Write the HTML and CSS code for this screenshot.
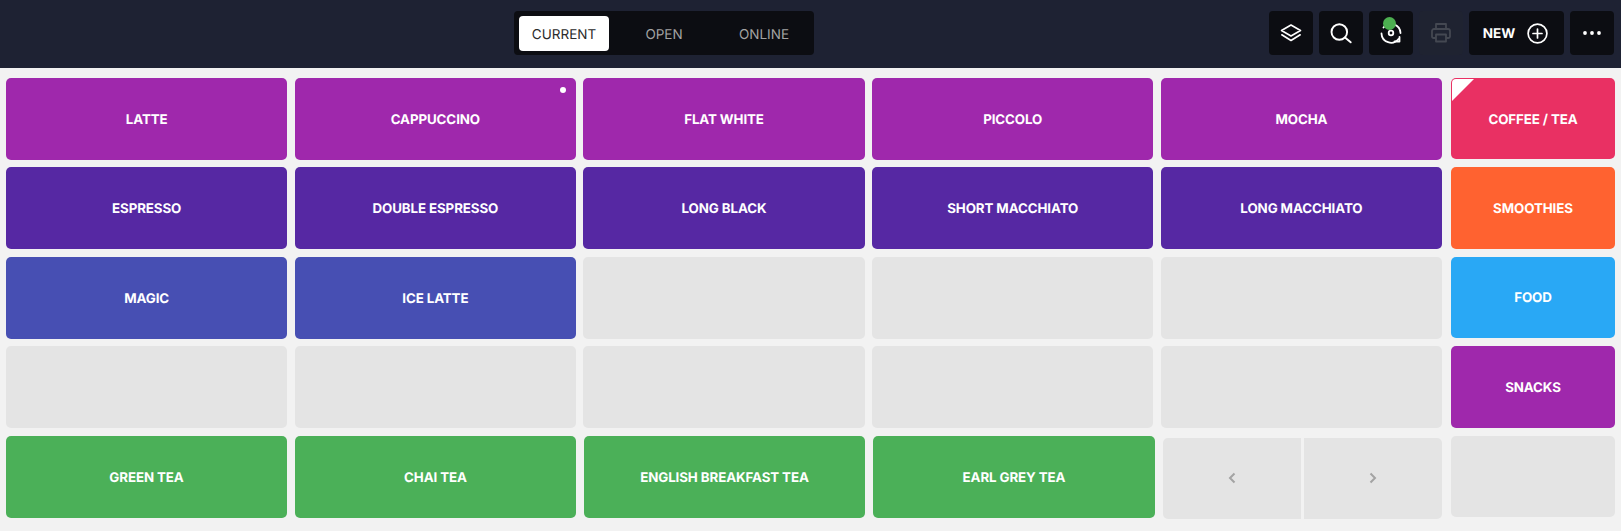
FILE: index.html
```html
<!DOCTYPE html>
<html lang="en">
<head>
<meta charset="utf-8">
<title>POS</title>
<link rel="stylesheet" href="styles.css">
</head>
<body>
<header class="topbar">
  <nav class="tabs">
    <button class="tab tab-active">CURRENT</button>
    <button class="tab">OPEN</button>
    <button class="tab">ONLINE</button>
  </nav>
  <div class="actions">
    <button class="action" aria-label="Layers">
      <svg width="22" height="22" viewBox="0 0 22 22" fill="none" stroke="#fff" stroke-width="1.6" stroke-linejoin="round" stroke-linecap="round"><path d="M11 3 20.500 8.500 11 14 1.500 8.500Z"/><path d="M1.800 12.800 11 18.500 20.200 12.800"/></svg>
    </button>
    <button class="action" aria-label="Search">
      <svg width="24" height="24" viewBox="0 0 24 24" fill="none" stroke="#fff" stroke-width="1.900" stroke-linecap="round"><circle cx="10.300" cy="11" r="7.800"/><path d="M16 16.500 21.700 21.300"/></svg>
    </button>
    <button class="action" aria-label="Sync">
      <svg width="22" height="22" viewBox="0 0 22 22" fill="none" stroke="#fff" stroke-width="1.800" stroke-linecap="round" stroke-linejoin="round"><path d="M1.500 11.500a9.500 9.500 0 0 0 17 5.500"/><path d="M20.500 11a9.500 9.500 0 0 0-17-5.500"/><path d="M14.500 19.500h5v-4.500"/><circle cx="11" cy="11" r="2.300"/></svg>
      <span class="status-dot"></span>
    </button>
    <button class="action action-disabled" aria-label="Print">
      <svg width="22" height="22" viewBox="0 0 22 22" fill="none" stroke="#444852" stroke-width="1.800" stroke-linejoin="round"><path d="M6 7V2h10V7"/><path d="M6 16H3.500A1.500 1.500 0 0 1 2 14.500V9a2 2 0 0 1 2-2h14a2 2 0 0 1 2 2v5.500a1.500 1.500 0 0 1-1.500 1.500H16"/><path d="M6 12.500h10v7H6z"/></svg>
    </button>
    <button class="action action-new">
      <span class="new-label">NEW</span>
      <svg width="21" height="21" viewBox="0 0 21 21" fill="none" stroke="#fff" stroke-width="1.700" stroke-linecap="round"><circle cx="10.500" cy="10.500" r="9.400"/><path d="M10.500 6v9M6 10.500h9"/></svg>
    </button>
    <button class="action" aria-label="More">
      <svg width="20" height="6" viewBox="0 0 20 6" fill="#fff"><circle cx="3" cy="3" r="1.900"/><circle cx="10" cy="3" r="1.900"/><circle cx="17" cy="3" r="1.900"/></svg>
    </button>
  </div>
</header>
<main class="board">
  <div class="products">
    <section class="items">
      <button class="tile purple">LATTE</button>
      <button class="tile purple">CAPPUCCINO<span class="tile-dot"></span></button>
      <button class="tile purple">FLAT WHITE</button>
      <button class="tile purple">PICCOLO</button>
      <button class="tile purple">MOCHA</button>

      <button class="tile violet">ESPRESSO</button>
      <button class="tile violet">DOUBLE ESPRESSO</button>
      <button class="tile violet">LONG BLACK</button>
      <button class="tile violet">SHORT MACCHIATO</button>
      <button class="tile violet">LONG MACCHIATO</button>

      <button class="tile indigo">MAGIC</button>
      <button class="tile indigo">ICE LATTE</button>
      <div class="tile empty"></div>
      <div class="tile empty"></div>
      <div class="tile empty"></div>

      <div class="tile empty"></div>
      <div class="tile empty"></div>
      <div class="tile empty"></div>
      <div class="tile empty"></div>
      <div class="tile empty"></div>
    </section>
    <section class="tea-row">
      <button class="tile green">GREEN TEA</button>
      <button class="tile green">CHAI TEA</button>
      <button class="tile green">ENGLISH BREAKFAST TEA</button>
      <button class="tile green">EARL GREY TEA</button>
      <div class="pager">
        <button class="page-btn" aria-label="Previous"><svg width="8" height="12" viewBox="0 0 8 12" fill="none" stroke="#a3a3a3" stroke-width="2"><path d="M6.500 1.500 2 6l4.500 4.500"/></svg></button>
        <button class="page-btn" aria-label="Next"><svg width="8" height="12" viewBox="0 0 8 12" fill="none" stroke="#a3a3a3" stroke-width="2"><path d="M1.500 1.500 6 6l-4.500 4.500"/></svg></button>
      </div>
    </section>
  </div>
  <aside class="categories">
    <button class="tile pink selected">COFFEE / TEA</button>
    <button class="tile orange">SMOOTHIES</button>
    <button class="tile blue">FOOD</button>
    <button class="tile purple">SNACKS</button>
    <div class="tile empty"></div>
  </aside>
</main>
</body>
</html>
```
FILE: styles.css
```css
* { box-sizing: border-box; }
html, body { margin: 0; padding: 0; }
body {
  width: 1621px;
  height: 531px;
  overflow: hidden;
  background: #f2f2f2;
  font-family: Inter, "Liberation Sans", sans-serif;
  text-rendering: geometricPrecision;
}
button { font-family: inherit; text-rendering: inherit; border: 0; padding: 0; cursor: pointer; }

.topbar {
  height: 68px;
  background: #1e2233;
  display: grid;
  grid-template-columns: 514px 300px 1fr;
  padding-top: 11px;
}
.tabs {
  grid-column: 2;
  height: 44px;
  background: #0c0d12;
  border-radius: 4px;
  padding: 5px;
  display: flex;
  gap: 10px;
}
.tab {
  width: 90px;
  height: 35px;
  padding-top: 2px;
  background: transparent;
  color: #a3a3a3;
  font-size: 13.500px;
  border-radius: 4px;
}
.tab-active { background: #fff; color: #2b2b2b; }
.actions {
  grid-column: 3;
  display: flex;
  justify-content: flex-end;
  gap: 6px;
  padding-right: 7px;
}
.action {
  position: relative;
  width: 44px;
  height: 44px;
  background: #0c0d12;
  border-radius: 4px;
  display: flex;
  align-items: center;
  justify-content: center;
  color: #fff;
}
.action-disabled { background: #1f2331; }
.action-new {
  width: 95px;
  gap: 12px;
  padding-right: 2px;
  font-size: 13.500px;
  font-weight: 700;
}
.new-label { padding-top: 2px; }
.status-dot {
  position: absolute;
  left: 13.500px;
  top: 5.500px;
  width: 13px;
  height: 13px;
  border-radius: 50%;
  background: #4caf50;
}

.board {
  display: grid;
  grid-template-columns: 1436.250px 164px;
  column-gap: 8.750px;
  padding: 10px 0 0 6px;
}
.items {
  display: grid;
  grid-template-columns: repeat(5, 281.300px);
  grid-auto-rows: 82px;
  column-gap: 7.400px;
  row-gap: 7.330px;
}
.tea-row {
  display: grid;
  grid-template-columns: 281px 281px 281px 282px 279px;
  grid-auto-rows: 82px;
  column-gap: 8px;
  margin-top: 8px;
}
.categories {
  display: grid;
  grid-auto-rows: 81.400px;
  row-gap: 8px;
}
.tile {
  position: relative;
  padding-top: 2px;
  border-radius: 5px;
  color: #fff;
  font-size: 13.333px;
  font-weight: 700;
  letter-spacing: -0.100px;
  display: flex;
  align-items: center;
  justify-content: center;
}
.purple { background: #9f28ac; }
.violet { background: #5628a3; }
.indigo { background: #474fb3; }
.pink { background: #e93063; }
.orange { background: #ff6230; }
.blue { background: #29a8f5; }
.green { background: #4bb058; }
.empty { background: #e4e4e4; }
.tile-dot {
  position: absolute;
  top: 9px;
  right: 10px;
  width: 6px;
  height: 6px;
  border-radius: 50%;
  background: #fff;
}
.selected::before {
  content: "";
  position: absolute;
  left: 1px;
  top: 1px;
  border-style: solid;
  border-width: 22px 22px 0 0;
  border-color: #fff transparent transparent transparent;
  border-top-left-radius: 4px;
}
.pager {
  display: flex;
  gap: 3px;
  height: 81px;
  margin-top: 2px;
}
.page-btn {
  flex: 1;
  background: #e4e4e4;
  display: flex;
  align-items: center;
  justify-content: center;
}
.page-btn:first-child { border-radius: 5px 0 0 5px; }
.page-btn:last-child { border-radius: 0 5px 5px 0; }
```
